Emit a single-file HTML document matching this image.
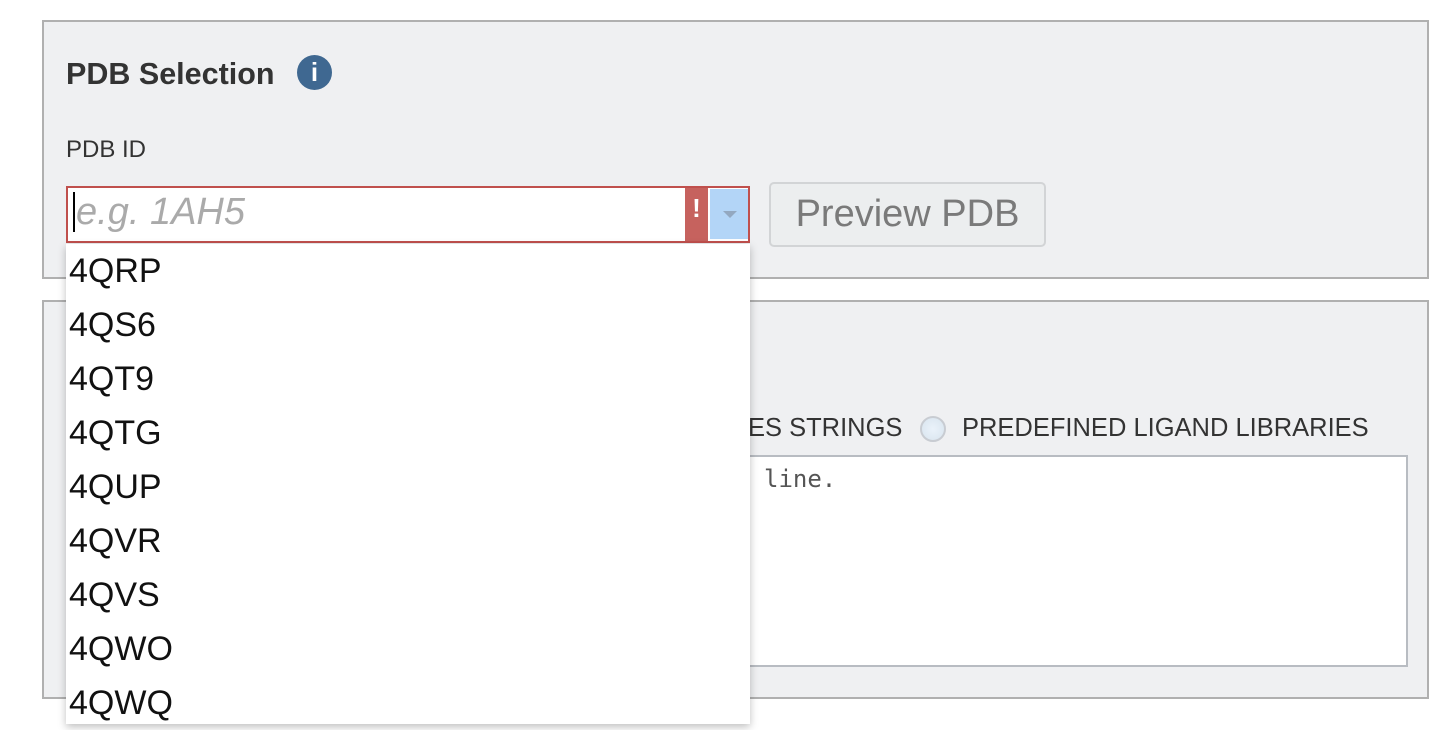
<!DOCTYPE html>
<html><head><style>
body{margin:0;width:1434px;height:714px;background:#fff;position:relative;overflow:hidden;font-family:"Liberation Sans",Arial,sans-serif;color:#333}
.p{position:absolute;left:42px;width:1383px;background:#eff0f2;border:2px solid #b0b0b0}
.a{position:absolute}
</style></head><body>
<div class="p" style="top:20px;height:255px"></div>
<div class="p" style="top:300px;height:395px"></div>
<div class="a" style="left:66px;top:57px;font-size:30.5px;font-weight:bold;color:#333">PDB Selection</div>
<div class="a" style="left:297px;top:55px;width:35px;height:35px;border-radius:50%;background:#3f6891;color:#fff;text-align:center;font:bold 26px/35px 'Liberation Sans',sans-serif">i</div>
<div class="a" style="left:66px;top:136px;font-size:24px">PDB ID</div>
<div class="a" style="left:66px;top:186px;width:680px;height:53px;border:2px solid #c0504d;background:#fff"></div>
<div class="a" style="left:73px;top:192px;width:2px;height:40px;background:#000"></div>
<div class="a" style="left:76px;top:191px;font-size:38px;font-style:italic;color:#aaa">e.g. 1AH5</div>
<div class="a" style="left:685px;top:188px;width:23px;height:53px;background:#c6625e;color:#fff;font:bold 26px/40px sans-serif;text-align:center">!</div>
<div class="a" style="left:710px;top:189px;width:38px;height:50px;background:#b3d5f7"></div>
<div class="a" style="left:723px;top:211px;width:0;height:0;border-left:7px solid transparent;border-right:7px solid transparent;border-top:7px solid #93a8c0"></div>
<div class="a" style="left:769px;top:182px;width:273px;height:61px;background:#eceeef;border:2px solid #d2d4d6;border-radius:5px;color:#7a7a7a;font-size:38px;line-height:61px;text-align:center">Preview PDB</div>
<div class="a" style="left:748px;top:414px;font-size:25.5px;color:#333">ES STRINGS</div>
<div class="a" style="left:920px;top:416px;width:22px;height:22px;border-radius:50%;border:2px solid #c8ccd2;background:radial-gradient(#eaf2fa,#d8e4ee)"></div>
<div class="a" style="left:962px;top:414px;font-size:25.5px;color:#333">PREDEFINED LIGAND LIBRARIES</div>
<div class="a" style="left:700px;top:455px;width:704px;height:208px;background:#fff;border:2px solid #b8bcc2"></div>
<div class="a" style="left:764px;top:465px;font:24px 'DejaVu Sans Mono','Liberation Mono',monospace;color:#555">line.</div>
<div class="a" style="left:66px;top:244px;width:684px;height:480px;background:#fff;box-shadow:0 3px 8px rgba(0,0,0,.25);font-size:34px;color:#111;line-height:54px">
<div style="padding-left:3px">4QRP</div><div style="padding-left:3px">4QS6</div><div style="padding-left:3px">4QT9</div><div style="padding-left:3px">4QTG</div><div style="padding-left:3px">4QUP</div><div style="padding-left:3px">4QVR</div><div style="padding-left:3px">4QVS</div><div style="padding-left:3px">4QWO</div><div style="padding-left:3px">4QWQ</div>
</div>
</body></html>
